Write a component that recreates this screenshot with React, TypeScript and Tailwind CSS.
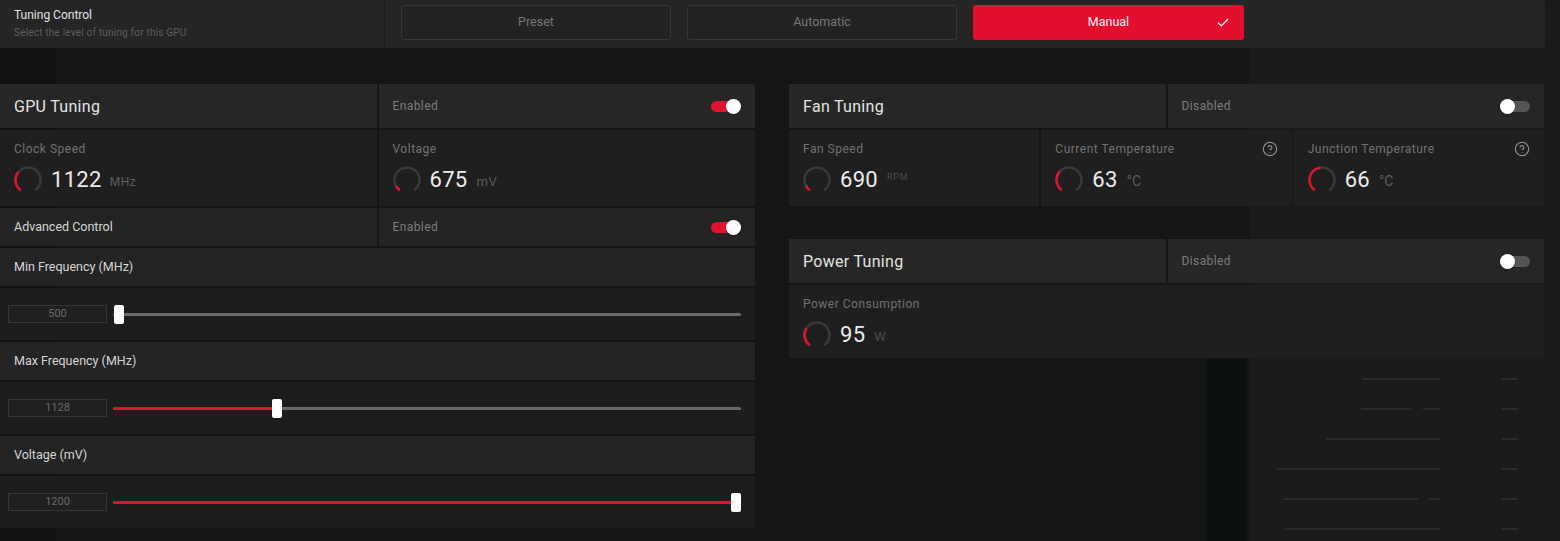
import { Check, CircleHelp } from "lucide-react";

const RED = "#e0132f";

function Gauge({ value }: { value: number }) {
  const r = 12.5;
  const c = 15;
  const start = 125;
  const sweep = 290;
  const pt = (a: number) => [
    c + r * Math.cos((a * Math.PI) / 180),
    c + r * Math.sin((a * Math.PI) / 180),
  ];
  const arc = (a0: number, a1: number) => {
    const [x0, y0] = pt(a0);
    const [x1, y1] = pt(a1);
    const large = a1 - a0 > 180 ? 1 : 0;
    return `M${x0} ${y0} A${r} ${r} 0 ${large} 1 ${x1} ${y1}`;
  };
  const end = start + sweep * value;
  return (
    <svg width="30" height="30" viewBox="0 0 30 30" className="shrink-0">
      <path d={arc(start, start + sweep)} fill="none" stroke="#3a3a3a" strokeWidth="2.5" />
      <path d={arc(start, end)} fill="none" stroke={RED} strokeWidth="2.5" />
    </svg>
  );
}

function Toggle({ on }: { on: boolean }) {
  return (
    <div className="relative w-[30px] h-[15px] flex items-center">
      <div
        className={
          on
            ? "w-full h-[11px] rounded-full bg-[#e0132f]"
            : "w-full h-[11px] rounded-full bg-[#555555]"
        }
      />
      <div
        className={
          on
            ? "absolute right-0 top-0 w-[15px] h-[15px] rounded-full bg-white shadow"
            : "absolute left-0 top-0 w-[15px] h-[15px] rounded-full bg-white shadow"
        }
      />
    </div>
  );
}

function HeaderRow({ title, status, on }: { title: string; status: string; on: boolean }) {
  return (
    <div className="flex gap-[2px] h-[44px]">
      <div className="flex-1 bg-[#262626] flex items-center px-[14px] text-[16px] text-[#e4e4e4] tracking-[0.3px] pt-[2px]">
        {title}
      </div>
      <div className="flex-1 bg-[#262626] flex items-center justify-between pl-[14px] pr-[14px] rounded-tr-[3px]">
        <span className="text-[12px] text-[#7c7c7c] tracking-[0.4px]">{status}</span>
        <Toggle on={on} />
      </div>
    </div>
  );
}

function Metric({
  label,
  value,
  unit,
  unitClass,
  gauge,
  help,
}: {
  label: string;
  value: string;
  unit: string;
  unitClass: string;
  gauge: number;
  help?: boolean;
}) {
  return (
    <div className="flex-1 bg-[#1f1f1f] pl-[14px] pr-[14px] pt-[10px]">
      <div className="flex items-center justify-between h-[18px]">
        <span className="text-[12px] text-[#727272] tracking-[0.5px]">{label}</span>
        {help && <CircleHelp size={16} strokeWidth={1.6} className="text-[#9a9a9a]" />}
      </div>
      <div className="flex items-center mt-[7px] -ml-[1px]">
        <Gauge value={gauge} />
        <span className="ml-[8px] text-[22px] leading-none text-[#ececec] tracking-[0.3px]">{value}</span>
        <span className={unitClass}>{unit}</span>
      </div>
    </div>
  );
}

function LabelRow({ text }: { text: string }) {
  return (
    <div className="h-[38px] bg-[#242424] flex items-center px-[14px] text-[12.5px] text-[#d6d6d6]">
      {text}
    </div>
  );
}

function SliderRow({ value, pct, filled }: { value: string; pct: number; filled: boolean }) {
  return (
    <div className="h-[52px] bg-[#1d1d1d] flex items-center pl-[8px] pr-[14px]">
      <div className="w-[99px] h-[18px] border border-[#363636] bg-[#202020] flex items-center justify-center text-[11px] text-[#6a6a6a]">
        {value}
      </div>
      <div className="relative flex-1 ml-[6px] h-[19px] flex items-center">
        <div className="w-full h-[3px] bg-[#6a6a6a] rounded-full" />
        {filled && (
          <div
            className="absolute left-0 h-[3px] bg-[#d8172e] rounded-full"
            style={{ width: `${pct}%` }}
          />
        )}
        <div
          className="absolute top-0 w-[10px] h-[19px] bg-white rounded-[2px]"
          style={{ left: `calc(${pct}% - 5px)` }}
        />
      </div>
    </div>
  );
}

function ModeButton({ label, active }: { label: string; active?: boolean }) {
  return (
    <div
      className={
        active
          ? "relative w-[271px] h-[35px] rounded-[3px] bg-[#e20f2f] flex items-center justify-center text-[12.5px] text-[#f3f3f3] pt-[1px]"
          : "w-[270px] h-[35px] rounded-[3px] border border-[#383838] bg-[#232323] flex items-center justify-center text-[12.5px] text-[#767676] pt-[1px]"
      }
    >
      {label}
      {active && <Check size={14} strokeWidth={2.2} className="absolute right-[14px] text-white" />}
    </div>
  );
}

function FaintRows() {
  const rows = [
    { a: 78, b: 0 },
    { a: 51, b: 17 },
    { a: 114, b: 0 },
    { a: 163, b: 0 },
    { a: 135, b: 11 },
    { a: 155, b: 0 },
  ];
  return (
    <div className="flex-1 flex flex-col gap-[27px] pt-[19px] pr-[27px] bg-[#1b1b1b]">
      {rows.map((r, i) => (
        <div key={i} className="flex justify-end items-center h-[3px]">
          <div className="h-[2px] bg-[#2a2a2a]" style={{ width: r.a }} />
          {r.b > 0 && <div className="h-[2px] bg-[#2a2a2a] ml-[11px]" style={{ width: r.b }} />}
          <div className="h-[2px] w-[15px] bg-[#2c2c2c] ml-[62px]" />
        </div>
      ))}
    </div>
  );
}

export default function App() {
  return (
    <div className="w-[1560px] h-[541px] overflow-hidden font-['Roboto',sans-serif] bg-[linear-gradient(to_right,#111111_0,#111111_55px,#151515_56px,#151515_1249px,#1a1a1a_1250px)]">
      {/* Tuning control bar */}
      <div className="w-[1545px] h-[48px] bg-[#252525] rounded-r-[4px] flex items-center">
        <div className="w-[385px] h-full flex flex-col justify-center pl-[14px] border-r border-[#1b1b1b] -mt-[2px]">
          <span className="text-[12px] text-[#e2e2e2] leading-[16px]">Tuning Control</span>
          <span className="text-[10px] text-[#5f5f5f] leading-[14px] mt-[3px] tracking-[0.2px]">
            Select the level of tuning for this GPU
          </span>
        </div>
        <div className="flex gap-[16px] ml-[16px] -mt-[4px]">
          <ModeButton label="Preset" />
          <ModeButton label="Automatic" />
          <ModeButton label="Manual" active />
        </div>
      </div>

      <div className="flex gap-[34px] pt-[36px] h-[calc(100%-48px)]">
        {/* GPU tuning */}
        <div className="w-[755px] flex flex-col gap-[2px]">
          <HeaderRow title="GPU Tuning" status="Enabled" on />
          <div className="flex gap-[2px] h-[76px]">
            <Metric label="Clock Speed" value="1122" unit="MHz" unitClass="ml-[8px] text-[12px] text-[#5e5e5e] tracking-[0.5px] mt-[3px]" gauge={0.33} />
            <Metric label="Voltage" value="675" unit="mV" unitClass="ml-[9px] text-[13px] text-[#5e5e5e] tracking-[0.5px] mt-[3px]" gauge={0.09} />
          </div>
          <div className="flex gap-[2px] h-[38px]">
            <div className="flex-1 bg-[#242424] flex items-center px-[14px] text-[12.5px] text-[#d6d6d6]">
              Advanced Control
            </div>
            <div className="flex-1 bg-[#242424] flex items-center justify-between px-[14px]">
              <span className="text-[12px] text-[#7c7c7c] tracking-[0.4px]">Enabled</span>
              <Toggle on />
            </div>
          </div>
          <LabelRow text="Min Frequency (MHz)" />
          <SliderRow value="500" pct={1} filled={false} />
          <LabelRow text="Max Frequency (MHz)" />
          <SliderRow value="1128" pct={26.1} filled />
          <LabelRow text="Voltage (mV)" />
          <SliderRow value="1200" pct={99.2} filled />
        </div>

        {/* Right column */}
        <div className="w-[755px] flex flex-col">
          <div className="flex flex-col gap-[2px]">
            <HeaderRow title="Fan Tuning" status="Disabled" on={false} />
            <div className="flex gap-[2px] h-[76px]">
              <Metric label="Fan Speed" value="690" unit="RPM" unitClass="ml-[9px] text-[9px] text-[#4e4e4e] tracking-[0.8px] -mt-[4px]" gauge={0.09} />
              <Metric label="Current Temperature" value="63" unit="°C" unitClass="ml-[9px] text-[14px] text-[#5e5e5e] mt-[3px]" gauge={0.34} help />
              <Metric label="Junction Temperature" value="66" unit="°C" unitClass="ml-[9px] text-[14px] text-[#5e5e5e] mt-[3px]" gauge={0.48} help />
            </div>
          </div>

          <div className="flex flex-col gap-[2px] mt-[33px]">
            <HeaderRow title="Power Tuning" status="Disabled" on={false} />
            <div className="flex h-[73px]">
              <Metric label="Power Consumption" value="95" unit="W" unitClass="ml-[9px] text-[13px] text-[#4e4e4e] mt-[3px]" gauge={0.3} />
            </div>
          </div>

          <div className="flex-1 flex">
            <div className="w-[416px]" />
            <div className="w-[41px] bg-[#0c1112]" />
            <div className="w-[4px]" />
            <FaintRows />
          </div>
        </div>
      </div>
    </div>
  );
}
